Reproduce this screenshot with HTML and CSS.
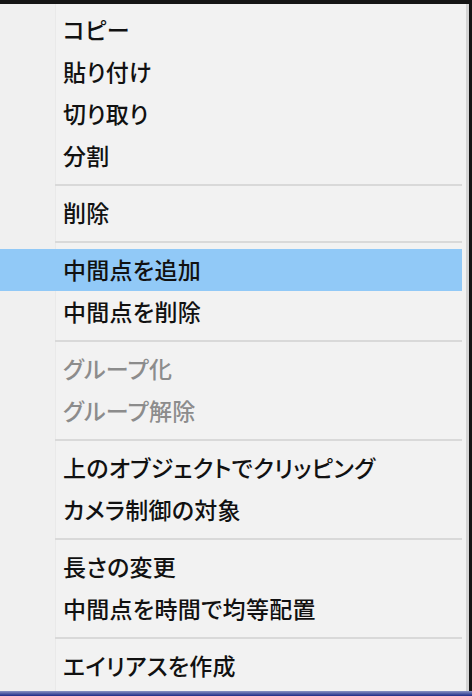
FILE: index.html
```html
<!DOCTYPE html>
<html lang="ja">

<head>
    <meta charset="UTF-8">
    <title>Context Menu</title>
    <link rel="stylesheet" href="styles.css">
</head>

<body>
    <div class="desktop">
        <ul class="context-menu">
            <li class="menu-item">コピー</li>
            <li class="menu-item">貼り付け</li>
            <li class="menu-item">切り取り</li>
            <li class="menu-item">分割</li>
            <li class="separator"></li>
            <li class="menu-item">削除</li>
            <li class="separator"></li>
            <li class="menu-item active">中間点を追加</li>
            <li class="menu-item">中間点を削除</li>
            <li class="separator"></li>
            <li class="menu-item disabled">グループ化</li>
            <li class="menu-item disabled">グループ解除</li>
            <li class="separator"></li>
            <li class="menu-item">上のオブジェクトでクリッピング</li>
            <li class="menu-item">カメラ制御の対象</li>
            <li class="separator"></li>
            <li class="menu-item">長さの変更</li>
            <li class="menu-item">中間点を時間で均等配置</li>
            <li class="separator"></li>
            <li class="menu-item">エイリアスを作成</li>
        </ul>
        <div class="taskbar"></div>
    </div>
</body>

</html>
```

FILE: styles.css
```css
* {
    margin: 0;
    padding: 0;
    box-sizing: border-box;
    list-style-type: none;
}

html,
body {
    width: 472px;
    height: 696px;
    overflow: hidden;
}

body {
    background-color: #151515;
    font-family: "Noto Sans CJK JP", "Noto Sans", sans-serif;
}

.desktop {
    display: flex;
    flex-direction: column;
    height: 100%;
    padding-top: 4px;
}

.context-menu {
    width: 469px;
    height: 687px;
    padding: 5px 0;
    background-color: #f2f2f2;
    /* gutter on the left where icons would sit */
    background-image: linear-gradient(to right, #f0f0f0 55px, #e9e9e9 55px, #e9e9e9 56px, transparent 56px);
    border-right: 3px solid #d4d4d4;
}

.menu-item {
    height: 42px;
    line-height: 40px;
    padding-left: 63px;
    font-size: 23px;
    font-weight: 500;
    color: #111;
    font-feature-settings: "palt";
    letter-spacing: 0.3px;
}

.menu-item.active {
    background-color: #91c9f7;
    margin-right: 4px;
}

.menu-item.disabled {
    color: #8c8c8c;
}

.separator {
    height: 15px;
    margin: 0 4px 0 55px;
    display: flex;
    align-items: center;
}

.separator::after {
    content: "";
    display: block;
    width: 100%;
    height: 2px;
    background-color: #d9d9d9;
}

.taskbar {
    flex: 1;
    background: linear-gradient(to bottom, #8a93c4, #1d2a86);
}
```
